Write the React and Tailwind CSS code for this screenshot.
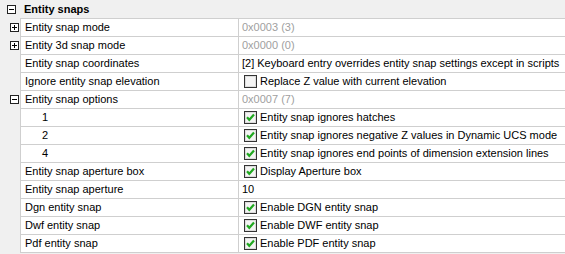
import React from "react";

const Box = ({ minus, className = "" }) => (
  <svg width="9" height="9" viewBox="0 0 9 9" className={className}>
    <rect x="0.5" y="0.5" width="8" height="8" fill="#fff" stroke="#222" />
    <line x1="2" y1="4.5" x2="7" y2="4.5" stroke="#000" />
    {!minus && <line x1="4.5" y1="2" x2="4.5" y2="7" stroke="#000" />}
  </svg>
);

const Check = ({ checked }) => (
  <svg width="13" height="13" viewBox="0 0 13 13" className="shrink-0">
    <rect x="0.5" y="0.5" width="12" height="12" fill="#f4f4f4" stroke="#333" />
    <rect x="1.5" y="1.5" width="10" height="10" fill="none" stroke="#dcdcdc" />
    {checked && (
      <path d="M3 6.2 L5.3 8.8 L10 3.6" fill="none" stroke="#21a821" strokeWidth="2.2" />
    )}
  </svg>
);

const rows = [
  { name: "Entity snap mode", value: "0x0003 (3)", gray: true, plus: true },
  { name: "Entity 3d snap mode", value: "0x0000 (0)", gray: true, plus: true },
  { name: "Entity snap coordinates", value: "[2] Keyboard entry overrides entity snap settings except in scripts" },
  { name: "Ignore entity snap elevation", value: "Replace Z value with current elevation", check: false },
  { name: "Entity snap options", value: "0x0007 (7)", gray: true, minus: true },
  { name: "1", child: true, value: "Entity snap ignores hatches", check: true },
  { name: "2", child: true, value: "Entity snap ignores negative Z values in Dynamic UCS mode", check: true },
  { name: "4", child: true, value: "Entity snap ignores end points of dimension extension lines", check: true },
  { name: "Entity snap aperture box", value: "Display Aperture box", check: true },
  { name: "Entity snap aperture", value: "10" },
  { name: "Dgn entity snap", value: "Enable DGN entity snap", check: true },
  { name: "Dwf entity snap", value: "Enable DWF entity snap", check: true },
  { name: "Pdf entity snap", value: "Enable PDF entity snap", check: true },
];

export default function App() {
  return (
    <div
      className="w-[565px] h-[254px] bg-[#f0f0f0] text-[11px] leading-none text-black overflow-hidden"
      style={{ fontFamily: '"Liberation Sans", Arial, sans-serif' }}
    >
      <div className="h-[18px] flex items-center">
        <div className="w-[24px] shrink-0 flex pl-[7px]">
          <Box minus />
        </div>
        <span className="font-bold">Entity snaps</span>
      </div>
      <div className="ml-[20px] border-t border-l border-[#cfcfcf] bg-white">
        {rows.map((r, i) => (
          <div key={i} className="relative h-[18px] flex border-b border-[#cfcfcf]">
            {(r.plus || r.minus) && (
              <div className="absolute left-[-11px] top-[4px] flex">
                <Box minus={r.minus} />
              </div>
            )}
            <div
              className={`w-[218px] shrink-0 border-r border-[#cfcfcf] flex items-center ${
                r.child ? "pl-[21px]" : "pl-[4px]"
              }`}
            >
              {r.name}
            </div>
            <div
              className={`flex-1 flex items-center whitespace-nowrap ${
                r.check === undefined ? "pl-[3px]" : "pl-[5px] gap-[3px]"
              } ${r.gray ? "text-[#a0a0a0]" : ""}`}
            >
              {r.check !== undefined && <Check checked={r.check} />}
              <span>{r.value}</span>
            </div>
          </div>
        ))}
      </div>
    </div>
  );
}
